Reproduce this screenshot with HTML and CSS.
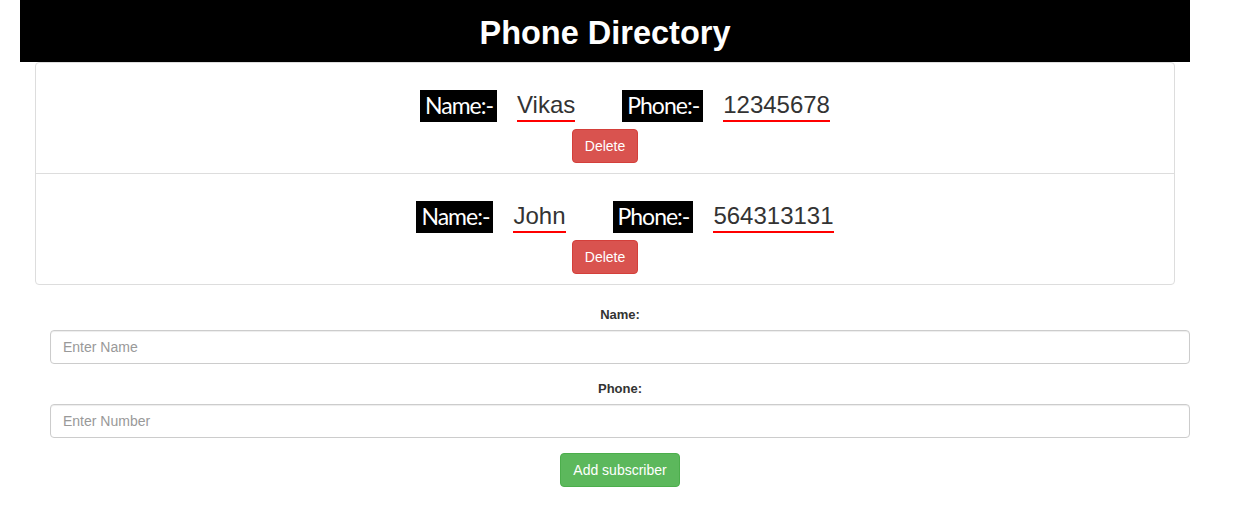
FILE: index.html
```html
<!DOCTYPE html>
<html>
<head>
<meta charset="utf-8">
<title>Phone Directory</title>
<link rel="stylesheet" href="styles.css">
</head>
<body>
<div class="wrap">
  <header class="header"><h1 class="title">Phone Directory</h1></header>
  <ul class="list">
    <li class="item">
      <div class="row">
        <span class="tag">Name:-</span>
        <span class="val val-name">Vikas</span>
        <span class="tag">Phone:-</span>
        <span class="val">12345678</span>
      </div>
      <button class="btn btn-danger">Delete</button>
    </li>
    <li class="item">
      <div class="row">
        <span class="tag">Name:-</span>
        <span class="val val-name">John</span>
        <span class="tag">Phone:-</span>
        <span class="val">564313131</span>
      </div>
      <button class="btn btn-danger">Delete</button>
    </li>
  </ul>
  <form class="form">
    <div class="group">
      <label class="lbl" for="name">Name:</label>
      <input class="input" id="name" type="text" placeholder="Enter Name">
    </div>
    <div class="group">
      <label class="lbl" for="phone">Phone:</label>
      <input class="input" id="phone" type="text" placeholder="Enter Number">
    </div>
    <div class="actions">
      <button type="button" class="btn btn-success">Add subscriber</button>
    </div>
  </form>
</div>
</body>
</html>
```
FILE: styles.css
```css
* { box-sizing: border-box; }
body {
  margin: 0;
  font-family: "Liberation Sans", Arial, sans-serif;
  font-size: 14px;
  color: #333;
  background: #fff;
}
.wrap {
  margin-left: 20px;
  width: 1170px;
}
.header {
  background: #000;
  height: 62px;
  padding-top: 4px;
}
.title {
  margin: 0;
  color: #fff;
  font-family: "Liberation Sans", Arial, sans-serif;
  font-weight: bold;
  font-size: 32.5px;
  line-height: 58px;
  text-align: center;
}
.list {
  list-style: none;
  margin: 0 15px;
  padding: 0;
  border: 1px solid #ddd;
  border-radius: 4px;
}
.item {
  padding: 27px 15px 10px;
  display: flex;
  flex-direction: column;
  align-items: center;
  gap: 7px;
}
.item + .item { border-top: 1px solid #ddd; }
.row {
  display: flex;
  align-items: stretch;
  height: 32px;
  padding-left: 40px;
}
.tag {
  background: #000;
  color: #fff;
  font-family: Lato, "Open Sans", sans-serif;
  font-size: 23px;
  letter-spacing: -1px;
  line-height: 31px;
  padding: 0 4px 1px 5px;
  margin-right: 20px;
}
.val {
  font-family: "Liberation Sans", Arial, sans-serif;
  font-size: 24px;
  line-height: 30px;
  color: #333;
  border-bottom: 2px solid #f00;
}
.val-name { margin-right: 47px; }
.btn {
  display: inline-block;
  font-family: "Liberation Sans", Arial, sans-serif;
  font-size: 14px;
  line-height: 20px;
  padding: 6px 12px;
  border: 1px solid transparent;
  border-radius: 4px;
  color: #fff;
  cursor: pointer;
}
.btn-danger { background: #d9534f; border-color: #d43f3a; }
.btn-success { background: #5cb85c; border-color: #4cae4c; }
.form {
  margin: 20px 0 0 30px;
  width: 1140px;
}
.group {
  margin-bottom: 15px;
  text-align: center;
}
.lbl {
  display: inline-block;
  font-weight: bold;
  font-size: 13px;
  line-height: 20px;
  margin-bottom: 5px;
  color: #333;
}
.input {
  display: block;
  width: 100%;
  height: 34px;
  padding: 6px 12px;
  font-family: "Liberation Sans", Arial, sans-serif;
  font-size: 14px;
  color: #555;
  border: 1px solid #ccc;
  border-radius: 4px;
  box-shadow: inset 0 1px 1px rgba(0,0,0,.075);
}
.input::placeholder { color: #999; }
.actions { text-align: center; }
```
